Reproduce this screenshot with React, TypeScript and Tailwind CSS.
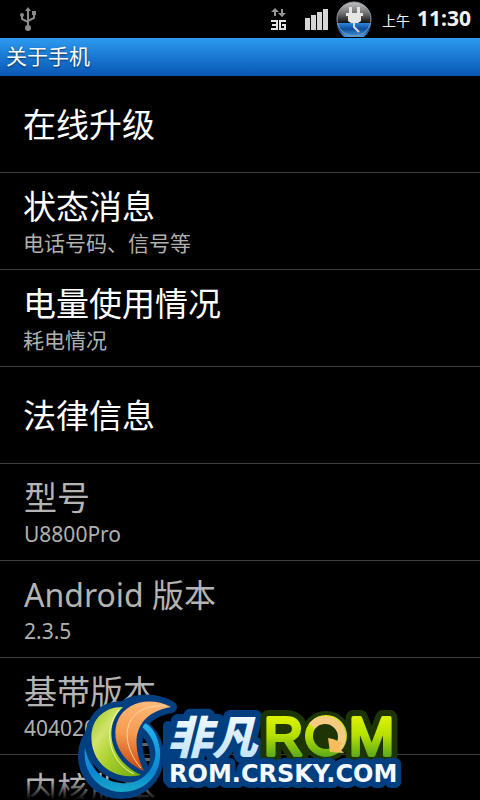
import React from "react";

type Item = { title: string; summary?: string; latin?: boolean };

const enabledItems: Item[] = [
  { title: "在线升级" },
  { title: "状态消息", summary: "电话号码、信号等" },
  { title: "电量使用情况", summary: "耗电情况" },
  { title: "法律信息" },
];

const infoItems: Item[] = [
  { title: "型号", summary: "U8800Pro" },
  { title: "Android 版本", summary: "2.3.5", latin: true },
  { title: "基带版本", summary: "4040205" },
  { title: "内核版本", summary: "2.6.35.7" },
];

function UsbIcon() {
  return (
    <svg width="16" height="24" viewBox="0 0 16 24" className="block" fill="none" stroke="#8a8a8a" strokeWidth="2">
      <path d="M8 2v18M2 8v4l6 3M14 7v4l-6 3" />
      <path d="M5 4l3-4 3 4z" fill="#8a8a8a" stroke="none" />
      <circle cx="8" cy="21" r="3" fill="#8a8a8a" stroke="none" />
      <circle cx="2" cy="8" r="2" fill="#8a8a8a" stroke="none" />
      <path d="M12 4h4v4h-4z" fill="#8a8a8a" stroke="none" />
    </svg>
  );
}

function NetworkIcon() {
  return (
    <svg width="16" height="22" viewBox="0 0 16 22" className="block">
      <path d="M4 0l4 4H5v4H3V4H0zM11 9l4-4h-3V1h-2v4H7z" fill="#969696" />
      <path d="M0 13h6v8H0M1 17h5M15 13H9v8h5v-4h-3" fill="none" stroke="#e4e4e4" strokeWidth="2" />
    </svg>
  );
}

function SignalIcon() {
  return (
    <svg width="24" height="22" viewBox="0 0 24 22" className="block" fill="#d6d6d6">
      <path d="M0 10h5v12H0zM6 7h5v15H6zM12 4h5v18h-5zM18 1h5v21h-5z" />
    </svg>
  );
}

function PlugIcon() {
  return (
    <svg width="36" height="36" viewBox="0 0 36 36" className="block">
      <defs>
        <linearGradient id="orbTop" x1="0" y1="0" x2="0" y2="1">
          <stop offset="0" stopColor="#c4c4c4" />
          <stop offset="0.35" stopColor="#6a6a6a" />
          <stop offset="0.6" stopColor="#151515" />
        </linearGradient>
        <linearGradient id="orbWater" x1="0" y1="0" x2="0" y2="1">
          <stop offset="0" stopColor="#2f86dd" />
          <stop offset="0.35" stopColor="#0d4d9c" />
          <stop offset="1" stopColor="#5cbcff" />
        </linearGradient>
      </defs>
      <circle cx="18" cy="18" r="17" fill="url(#orbTop)" />
      <path d="M1 22h34a17 17 0 0 1-34 0z" fill="url(#orbWater)" />
      <circle cx="18" cy="18" r="17" fill="none" stroke="#8f9aa6" strokeWidth="1" />
      <path d="M13 6h3v6h5V6h3v6h3v3h-2v5l-3 2h-7l-3-2v-5h-2v-3h3z" fill="#e6e6e6" />
      <path d="M18 22v4l5 5" fill="none" stroke="#d8d8d8" strokeWidth="2" />
    </svg>
  );
}

function StatusBar() {
  return (
    <header className="flex h-[38px] shrink-0 items-center bg-black pr-[9px] pl-5">
      <UsbIcon />
      <div className="ml-auto flex items-center">
        <NetworkIcon />
        <div className="ml-[18px]"><SignalIcon /></div>
        <div className="ml-[7px]"><PlugIcon /></div>
        <p className="ml-[10px] flex items-baseline leading-6 whitespace-nowrap text-[#f2f2f2]">
          <span className="mr-[7px] text-[14px]">上午</span>
          <span className="text-[21px] font-bold">11:30</span>
        </p>
      </div>
    </header>
  );
}

function Row({ item, muted }: { item: Item; muted: boolean }) {
  return (
    <li
      className={
        (muted ? "pl-6 text-[#b4b4b4] " : "pl-[23px] text-white ") +
        "flex h-[97px] shrink-0 flex-col justify-center border-b border-[#404040] pt-[2px]"
      }
    >
      <h2 className={(item.latin ? "text-[32px] " : "text-[33px] ") + "leading-[42px]"}>{item.title}</h2>
      {item.summary && <p className="text-[21px] leading-[30px] text-[#b0b0b0]">{item.summary}</p>}
    </li>
  );
}

function Watermark() {
  return (
    <svg
      width="330"
      height="108"
      viewBox="76 692 330 108"
      className="absolute bottom-0 left-[76px]"
      role="img"
      aria-label="非凡ROM ROM.CRSKY.COM"
    >
      <defs>
        <linearGradient id="green" x1="0" y1="0" x2="1" y2="1">
          <stop offset="0" stopColor="#8fc31f" />
          <stop offset="0.3" stopColor="#d3e46a" />
          <stop offset="0.55" stopColor="#a9cf2c" />
          <stop offset="1" stopColor="#6fa810" />
        </linearGradient>
        <linearGradient id="orange" x1="0.6" y1="0" x2="0.5" y2="1">
          <stop offset="0" stopColor="#ffb976" />
          <stop offset="0.5" stopColor="#f59a50" />
          <stop offset="1" stopColor="#c8480c" />
        </linearGradient>
        <linearGradient id="cyan" x1="0" y1="0" x2="0" y2="1">
          <stop offset="0" stopColor="#25b5ee" />
          <stop offset="0.7" stopColor="#0a86d0" />
          <stop offset="1" stopColor="#19a8c8" />
        </linearGradient>
        <linearGradient id="ice" x1="0" y1="0" x2="0" y2="1">
          <stop offset="0" stopColor="#ffffff" />
          <stop offset="1" stopColor="#b9e0fa" />
        </linearGradient>
        <linearGradient id="lime" gradientUnits="userSpaceOnUse" x1="0" y1="714" x2="0" y2="757">
          <stop offset="0" stopColor="#e2f500" />
          <stop offset="0.5" stopColor="#b5e000" />
          <stop offset="1" stopColor="#5aa81c" />
        </linearGradient>
      </defs>
      <path d="M141 743h14v3h-14zM141 758h12v3h-12z" fill="#666666" />
      <g fill="none" stroke="#023f80" strokeLinejoin="round" strokeLinecap="round">
        <circle cx="121" cy="756" r="36" strokeWidth="14" />
        <path d="M123 707C98 707 87 727 93 749C99 770 120 780 141 775L144 771C134 752 127 715 171 707C150 696 132 701 123 707z" strokeWidth="12" fill="#023f80" />
        <path d="M168 726L168 780" strokeWidth="10" />
      </g>
      <path d="M85 748C82 772 98 791 121 792C146 792 162 774 160 750C158 735 152 727 145 723L142 727C152 735 157 748 155 758C151 776 136 785 120 783C102 781 89 768 85 748z" fill="url(#cyan)" />
      <path d="M123 707C98 707 87 727 93 749C99 770 120 780 141 775C112 762 101 728 123 707z" fill="url(#green)" />
      <path d="M119 710C102 730 109 762 134 774" fill="none" stroke="#eff7a8" strokeWidth="1" />
      <path d="M171 707C150 696 126 702 118 720C109 742 124 763 144 771C134 752 127 715 171 707z" fill="url(#orange)" stroke="#023f80" strokeWidth="5" strokeLinejoin="round" paintOrder="stroke" />
      <path d="M166 706C122 703 118 742 141 768" fill="none" stroke="#ffd7a8" strokeWidth="1" />
      <text x="167" y="754" fontSize="45" fontWeight="900" fontStyle="italic" fontFamily="'Noto Sans CJK SC', sans-serif" fill="url(#ice)" stroke="#023f80" strokeWidth="14" strokeLinejoin="round" paintOrder="stroke">非凡</text>
      <g fontFamily="'Liberation Sans', sans-serif" fontSize="54" strokeLinejoin="round">
        <g fill="#1d3505" stroke="#1d3505" strokeWidth="16">
          <text x="264" y="755">R</text>
          <circle cx="326" cy="736" r="17" />
          <text x="349" y="755">M</text>
        </g>
        <g fill="url(#lime)" stroke="url(#lime)" strokeWidth="4">
          <text x="264" y="755">R</text>
          <text x="349" y="755">M</text>
        </g>
      </g>
      <circle cx="326" cy="736" r="17" fill="#1d3505" stroke="url(#lime)" strokeWidth="8" />
      <path d="M312 726A17 17 0 1 1 337 749" fill="none" stroke="#f4cb80" strokeWidth="8" />
      <path d="M328 738l2 14 14 1-5-5 4-5-10-4z" fill="#f5bd5c" />
      <text x="169" y="782" fontSize="24" fontWeight="700" fontFamily="'DejaVu Sans', sans-serif" fill="#f4faff" stroke="#023f80" strokeWidth="12" strokeLinejoin="round" paintOrder="stroke">ROM.CRSKY.COM</text>
    </svg>
  );
}

export default function App() {
  return (
    <div className="relative flex h-screen flex-col overflow-hidden bg-black font-['Noto_Sans','Noto_Sans_CJK_SC',sans-serif]">
      <StatusBar />
      <h1 className="flex h-[38px] shrink-0 items-center bg-linear-to-b from-[#2d9af0] to-[#0857b4] pl-[6px] text-[21px] text-white [text-shadow:0_1px_2px_rgba(0,0,0,0.6)]">
        关于手机
      </h1>
      <ul className="min-h-0 flex-1 overflow-hidden">
        {enabledItems.map((item) => (
          <Row key={item.title} item={item} muted={false} />
        ))}
        {infoItems.map((item) => (
          <Row key={item.title} item={item} muted />
        ))}
      </ul>
      <div className="absolute inset-x-0 bottom-0 h-5 bg-linear-to-t from-black to-transparent" />
      <Watermark />
    </div>
  );
}
